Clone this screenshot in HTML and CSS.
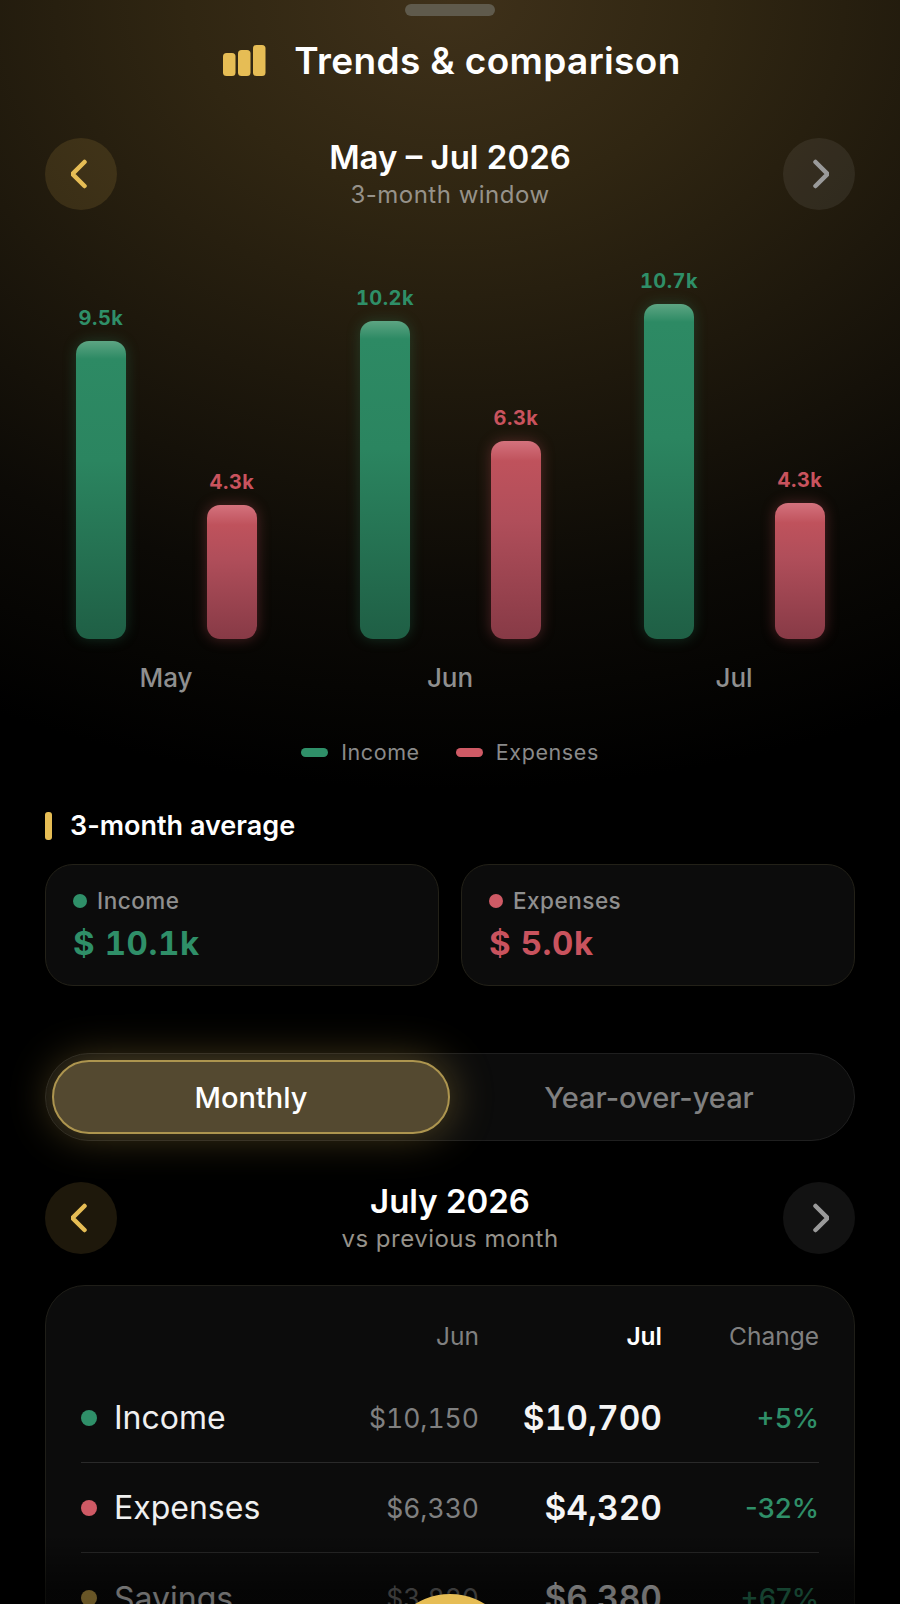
FILE: index.html
```html
<!DOCTYPE html>
<html lang="en">
<head>
    <meta charset="UTF-8">
    <meta name="viewport" content="width=device-width, initial-scale=1.0">
    <title>Trends &amp; comparison</title>
    <link rel="stylesheet" href="styles.css">
</head>
<body>
    <div class="sheet">
        <div class="handle"></div>
        <h1 class="title">
            <svg class="title-icon" width="43" height="31" viewBox="0 0 43 31">
                <rect x="0" y="8" width="12.5" height="23" rx="3.5"></rect>
                <rect x="15" y="5" width="12.5" height="26" rx="3.5"></rect>
                <rect x="30" y="0" width="12.5" height="31" rx="3.5"></rect>
            </svg>
            Trends &amp; comparison
        </h1>

        <div class="period period-top">
            <button class="nav nav-prev">
                <svg width="20" height="30" viewBox="0 0 20 30"><path d="M13.5 3 L1.5 15 L13.5 27"></path></svg>
            </button>
            <div class="period-text">
                <div class="period-name">May – Jul 2026</div>
                <div class="period-sub">3-month window</div>
            </div>
            <button class="nav nav-next">
                <svg width="20" height="30" viewBox="0 0 20 30"><path d="M6.5 3 L18.5 15 L6.5 27"></path></svg>
            </button>
        </div>

        <div class="chart">
            <div class="month">
                <div class="bar-col">
                    <span class="bar-value income-text">9.5k</span>
                    <div class="bar bar-income" style="height: 298px"></div>
                </div>
                <div class="bar-col">
                    <span class="bar-value expense-text">4.3k</span>
                    <div class="bar bar-expense" style="height: 134px"></div>
                </div>
            </div>
            <div class="month">
                <div class="bar-col">
                    <span class="bar-value income-text">10.2k</span>
                    <div class="bar bar-income" style="height: 318px"></div>
                </div>
                <div class="bar-col">
                    <span class="bar-value expense-text">6.3k</span>
                    <div class="bar bar-expense" style="height: 198px"></div>
                </div>
            </div>
            <div class="month">
                <div class="bar-col">
                    <span class="bar-value income-text">10.7k</span>
                    <div class="bar bar-income" style="height: 335px"></div>
                </div>
                <div class="bar-col">
                    <span class="bar-value expense-text">4.3k</span>
                    <div class="bar bar-expense" style="height: 136px"></div>
                </div>
            </div>
        </div>
        <div class="month-labels">
            <span>May</span>
            <span>Jun</span>
            <span>Jul</span>
        </div>

        <div class="legend">
            <span class="legend-item"><i class="swatch swatch-income"></i>Income</span>
            <span class="legend-item"><i class="swatch swatch-expense"></i>Expenses</span>
        </div>

        <h2 class="section-title">3-month average</h2>
        <div class="averages">
            <div class="avg-card">
                <div class="avg-label"><i class="dot dot-income"></i>Income</div>
                <div class="avg-value income-text">$ 10.1k</div>
            </div>
            <div class="avg-card">
                <div class="avg-label"><i class="dot dot-expense"></i>Expenses</div>
                <div class="avg-value expense-text">$ 5.0k</div>
            </div>
        </div>

        <div class="toggle">
            <div class="toggle-opt toggle-active">Monthly</div>
            <div class="toggle-opt">Year-over-year</div>
        </div>

        <div class="period period-bottom">
            <button class="nav nav-prev">
                <svg width="20" height="30" viewBox="0 0 20 30"><path d="M13.5 3 L1.5 15 L13.5 27"></path></svg>
            </button>
            <div class="period-text">
                <div class="period-name">July 2026</div>
                <div class="period-sub">vs previous month</div>
            </div>
            <button class="nav nav-next">
                <svg width="20" height="30" viewBox="0 0 20 30"><path d="M6.5 3 L18.5 15 L6.5 27"></path></svg>
            </button>
        </div>

        <div class="compare">
            <div class="compare-row compare-head">
                <span></span>
                <span>Jun</span>
                <span class="head-current">Jul</span>
                <span>Change</span>
            </div>
            <div class="compare-row">
                <span class="row-name"><i class="dot-big dot-income"></i>Income</span>
                <span class="prev">$10,150</span>
                <span class="current">$10,700</span>
                <span class="change">+5%</span>
            </div>
            <div class="compare-row">
                <span class="row-name"><i class="dot-big dot-expense"></i>Expenses</span>
                <span class="prev">$6,330</span>
                <span class="current">$4,320</span>
                <span class="change">-32%</span>
            </div>
            <div class="compare-row">
                <span class="row-name"><i class="dot-big dot-savings"></i>Savings</span>
                <span class="prev">$3,820</span>
                <span class="current">$6,380</span>
                <span class="change">+67%</span>
            </div>
        </div>

        <div class="fade"></div>
        <div class="fab"></div>
    </div>
</body>
</html>
```

FILE: styles.css
```css
* {
    box-sizing: border-box;
}
body {
    margin: 0;
    background: #000;
    font-family: Inter, "Noto Sans", sans-serif;
    color: #fff;
}
.sheet {
    position: relative;
    width: 900px;
    height: 1604px;
    overflow: hidden;
    padding: 4px 45px 0;
    background: radial-gradient(ellipse 1050px 790px at 50% 0, #3f311a 0%, #302612 25%, #1e180c 50%, #0c0a06 75%, #000 100%);
}
.handle {
    width: 90px;
    height: 12px;
    margin: 0 auto;
    border-radius: 6px;
    background: #5f5a4c;
}
.title {
    display: flex;
    align-items: center;
    justify-content: center;
    gap: 28px;
    height: 44px;
    margin: 22px 0 0;
    padding-left: 4px;
    font-size: 37px;
    font-weight: 600;
    letter-spacing: 0.35px;
}
.title-icon {
    fill: #e6bd55;
}
.period {
    display: flex;
    align-items: center;
    justify-content: space-between;
}
.period-top {
    margin-top: 56px;
}
.period-bottom {
    margin-top: 41px;
}
.nav {
    width: 72px;
    height: 72px;
    padding: 0;
    border: none;
    border-radius: 50%;
    display: flex;
    align-items: center;
    justify-content: center;
}
.nav svg {
    fill: none;
    stroke-width: 4.5;
    stroke-linecap: round;
    stroke-linejoin: round;
}
.nav-prev {
    background: rgba(230, 189, 85, 0.13);
}
.nav-prev svg {
    stroke: #e6bd55;
}
.nav-next {
    background: rgba(255, 255, 255, 0.07);
}
.nav-next svg {
    stroke: #9a9a9a;
}
.period-text {
    text-align: center;
}
.period-name {
    font-size: 33px;
    font-weight: 600;
    line-height: 38px;
}
.period-sub {
    margin-top: 4px;
    font-size: 24px;
    line-height: 30px;
    letter-spacing: 0.5px;
    color: #96928a;
}
.chart {
    display: flex;
    justify-content: space-between;
    align-items: flex-end;
    height: 370px;
    margin-top: 59px;
    padding: 0 30px 0 31px;
}
.month {
    display: flex;
    align-items: flex-end;
    gap: 81px;
}
.bar-col {
    display: flex;
    flex-direction: column;
    align-items: center;
    gap: 11px;
    width: 50px;
}
.bar-value {
    font-size: 20px;
    font-weight: 650;
    font-variant-numeric: tabular-nums;
    line-height: 24px;
    letter-spacing: 0.5px;
    white-space: nowrap;
}
.income-text {
    color: #2f8f68;
}
.expense-text {
    color: #c9535e;
}
.bar {
    width: 50px;
    border-radius: 13px;
}
.bar-income {
    background: linear-gradient(180deg, #5da583 0, #2d8a64 18px, #2b8560 40%, #1f5f45 100%);
    box-shadow: 0 0 14px rgba(47, 143, 104, 0.3);
}
.bar-expense {
    background: linear-gradient(180deg, #d4727d 0, #bf525c 20px, #b04e5a 40%, #873a46 100%);
    box-shadow: 0 0 14px rgba(201, 83, 94, 0.35);
}
.month-labels {
    display: grid;
    grid-template-columns: repeat(3, 1fr);
    margin: 24px -21px 0;
    text-align: center;
    font-size: 26px;
    font-weight: 500;
    line-height: 30px;
    color: #8f8f8f;
}
.legend {
    display: flex;
    justify-content: center;
    gap: 36px;
    margin-top: 45px;
    font-size: 21.5px;
    line-height: 28px;
    letter-spacing: 0.6px;
    color: #8a8a8a;
}
.legend-item {
    display: flex;
    align-items: center;
    gap: 13px;
}
.swatch {
    width: 27px;
    height: 9px;
    border-radius: 5px;
}
.swatch-income {
    background: #2f9069;
}
.swatch-expense {
    background: #cf5a65;
}
.section-title {
    position: relative;
    margin: 44px 0 0;
    padding-left: 25px;
    font-size: 27px;
    font-weight: 600;
    line-height: 32px;
}
.section-title::before {
    content: "";
    position: absolute;
    left: 0;
    top: 2px;
    width: 7px;
    height: 28px;
    border-radius: 3px;
    background: #e6bd55;
}
.averages {
    display: flex;
    gap: 22px;
    margin-top: 22px;
}
.avg-card {
    flex: 1;
    height: 122px;
    padding: 22px 27px;
    border: 1px solid #232118;
    border-radius: 28px;
    background: #0c0c0c;
}
.avg-label {
    display: flex;
    align-items: center;
    gap: 10px;
    font-size: 22.5px;
    font-weight: 500;
    line-height: 28px;
    letter-spacing: 0.5px;
    color: #8f8f8f;
}
.dot {
    width: 14px;
    height: 14px;
    border-radius: 50%;
}
.dot-income {
    background: #2f9069;
}
.dot-expense {
    background: #cf5a65;
}
.dot-savings {
    background: #e6bd55;
}
.avg-value {
    margin-top: 8px;
    font-size: 33px;
    font-weight: 700;
    font-variant-numeric: tabular-nums;
    line-height: 40px;
    letter-spacing: 0.6px;
}
.toggle {
    display: flex;
    height: 88px;
    margin-top: 67px;
    padding: 6px;
    border: 1px solid #1f1f1f;
    border-radius: 44px;
    background: #0c0c0c;
}
.toggle-opt {
    flex: 1;
    display: flex;
    align-items: center;
    justify-content: center;
    border-radius: 38px;
    font-size: 29px;
    font-weight: 550;
    color: #808080;
}
.toggle-active {
    flex: 0 0 398px;
    border: 2px solid #ad954f;
    background: #544930;
    color: #fff;
    box-shadow: 0 0 44px rgba(230, 189, 85, 0.34);
}
.compare {
    height: 400px;
    margin-top: 31px;
    padding: 32px 35px 0;
    border: 1px solid #1f1e18;
    border-radius: 40px;
    background: #0c0c0c;
}
.compare-row {
    display: grid;
    grid-template-columns: 1fr 140px 183px 157px;
    align-items: center;
    height: 90px;
    text-align: right;
    border-bottom: 1px solid #2a2a2a;
}
.compare-row:last-child {
    border-bottom: none;
}
.compare-head {
    height: 36px;
    margin-bottom: 19px;
    border-bottom: none;
    font-size: 24.5px;
    color: #808080;
}
.head-current {
    color: #fff;
    font-weight: 600;
}
.row-name {
    display: flex;
    align-items: center;
    gap: 17px;
    font-size: 32px;
    color: #f0f0f0;
}
.dot-big {
    width: 16px;
    height: 16px;
    border-radius: 50%;
}
.prev {
    font-size: 26.5px;
    font-variant-numeric: tabular-nums;
    color: #808080;
}
.current {
    font-size: 33.5px;
    font-weight: 600;
    font-variant-numeric: tabular-nums;
    color: #f5f5f5;
}
.change {
    font-size: 27.5px;
    font-weight: 500;
    color: #2f8f68;
}
.fade {
    position: absolute;
    left: 0;
    right: 0;
    bottom: 0;
    height: 70px;
    background: linear-gradient(180deg, rgba(0, 0, 0, 0), rgba(0, 0, 0, 0.55) 80%);
}
.fab {
    position: absolute;
    left: 384px;
    top: 1594px;
    width: 132px;
    height: 132px;
    border-radius: 50%;
    background: #e6bd55;
}
```
